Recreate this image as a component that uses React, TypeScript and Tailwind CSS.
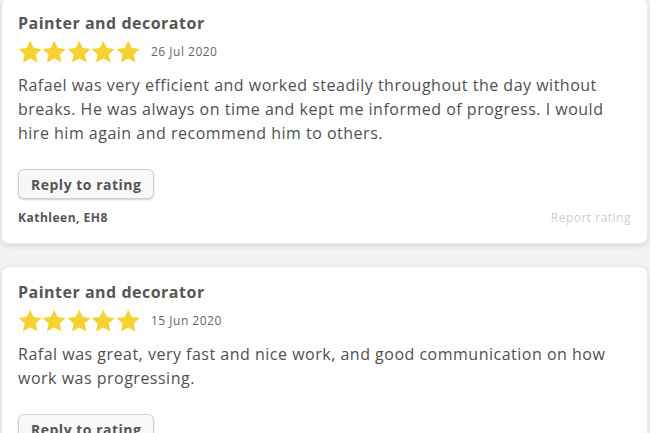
import React from "react";

type Review = {
  trade: string;
  date: string;
  text: string;
  author?: string;
};

const reviews: Review[] = [
  {
    trade: "Painter and decorator",
    date: "26 Jul 2020",
    text: "Rafael was very efficient and worked steadily throughout the day without breaks. He was always on time and kept me informed of progress. I would hire him again and recommend him to others.",
    author: "Kathleen, EH8",
  },
  {
    trade: "Painter and decorator",
    date: "15 Jun 2020",
    text: "Rafal was great, very fast and nice work, and good communication on how work was progressing.",
    author: "Steve, EH6",
  },
];

const Star = () => (
  <svg viewBox="0 0 24 24" className="w-[24.4px] h-[24px]">
    <path
      d="M12 0.8l3.5 7.3 8 1-5.9 5.5 1.6 7.9L12 18.6l-7.2 3.9 1.6-7.9L0.5 9.1l8-1z"
      fill="#f6d230"
    />
  </svg>
);

const ReviewCard = ({ review }: { review: Review }) => (
  <div className="bg-white border border-[#e9e9e9] rounded-lg shadow-[0_2px_6px_rgba(0,0,0,0.12)] px-4 pt-[13px] pb-4">
    <h3 className="text-[16px] leading-6 font-bold text-[#555]">
      {review.trade}
    </h3>
    <div className="flex items-center mt-[5px]">
      <div className="flex">
        {[0, 1, 2, 3, 4].map((i) => (
          <Star key={i} />
        ))}
      </div>
      <span className="ml-[11px] text-[12px] text-[#666]">{review.date}</span>
    </div>
    <p className="mt-[9px] text-[16px] leading-6 text-[#505050] pr-[10px]">
      {review.text}
    </p>
    <button className="mt-6 h-[30px] px-3 rounded-md border border-[#cfcfcf] bg-[#f8f8f8] shadow-[0_1px_2px_rgba(0,0,0,0.2)] text-[14px] font-bold text-[#555]">
      Reply to rating
    </button>
    <div className="mt-[10px] flex justify-between items-center text-[12px] leading-[18px]">
      <span className="font-bold text-[#555]">{review.author}</span>
      <span className="text-[#cfcfcf]">Report rating</span>
    </div>
  </div>
);

export default function App() {
  return (
    <div
      className="min-h-screen bg-[#f3f3f3] pl-[1px] pr-[2px] -mt-[3px] flex flex-col gap-[22px] tracking-[0.5px]"
      style={{ fontFamily: '"Open Sans", sans-serif' }}
    >
      {reviews.map((r, i) => (
        <ReviewCard key={i} review={r} />
      ))}
    </div>
  );
}
